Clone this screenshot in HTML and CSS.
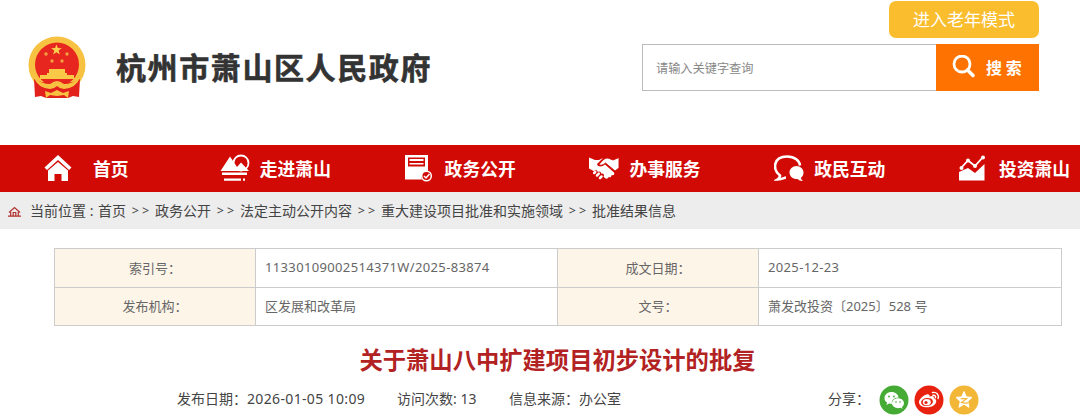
FILE: index.html
```
<!DOCTYPE html>
<html lang="zh-CN">
<head>
  <meta charset="UTF-8">
  <meta name="viewport" content="width=device-width, initial-scale=1.0">
  <title>杭州市萧山区人民政府</title>
  <link rel="stylesheet" href="styles.css">
</head>
<body>
  <div class="header">
    <div class="logo">
      <svg class="emblem" viewBox="0 0 58 63" width="58" height="63">
        <circle cx="29" cy="29" r="28.500" fill="#f7c242"/>
        <circle cx="29" cy="28.500" r="22" fill="#e6261f"/>
        <path d="M28.500 8.500l1.300 3.500 4 .2-3.200 2.400 1.200 3.900-3.300-2.300-3.400 2.300 1.200-3.900-3.200-2.400 4-.2z" fill="#f9cf4e"/>
        <g fill="#f3a03e">
          <circle cx="18" cy="18" r="1.700"/><circle cx="39" cy="18" r="1.700"/>
          <circle cx="24" cy="25" r="1.700"/><circle cx="34" cy="25" r="1.700"/>
        </g>
        <path d="M21 33h16v4h2v2h7v4H12v-4h7v-2h2z" fill="#f9c846"/>
        <path d="M6 43q10 6 23 2 13 4 23-2l-1 18-6-1-5 2H18l-5-2-6 1z" fill="#e3211c"/>
        <path d="M6 42q8 6 16 6 4-3 7-3t7 3q8 0 16-6-4 10-16 11-4 0-7-3-3 3-7 3Q10 52 6 42z" fill="#f7c242"/>
        <path d="M17 55l6 2 6-3 6 3 6-2-1 7-4-3-7 1-7-1-4 3z" fill="#f7c242"/>
      </svg>
      <h1>杭州市萧山区人民政府</h1>
    </div>
    <div class="tools">
      <a class="elder">进入老年模式</a>
      <div class="search">
        <input type="text" placeholder="请输入关键字查询">
        <button>
          <svg viewBox="0 0 24 24" width="24" height="24" fill="none" stroke="#fff">
            <circle cx="10" cy="9" r="8" stroke-width="2.800"/>
            <path d="M15.500 15l5.500 5.500" stroke-width="3.500" stroke-linecap="round"/>
          </svg>
          <span>搜 索</span>
        </button>
      </div>
    </div>
  </div>

  <div class="nav">
    <a class="home">
      <svg viewBox="0 0 30 30" width="30" height="30" fill="#fff">
        <path d="M15 1L28.500 13.500l-2.500 2.500L15 6 4 16l-2.500-2.500z"/>
        <path d="M15 8l10 8.500V27h-6.500v-7h-7v7H5V16.500z"/>
      </svg>
      <span>首页</span>
    </a>
    <a>
      <svg viewBox="0 0 30 30" width="30" height="30" fill="#fff">
        <circle cx="21" cy="9" r="7.500" fill="none" stroke="#fff" stroke-width="1.800"/>
        <path d="M.5 17L10 2.500 17 13l4-4.500 8 8.500z"/>
        <path d="M2 18.500h25v2.500H2zM4 24.500h17v2.300H4zM23 24.500h2v2.300h-2z"/>
      </svg>
      <span>走进萧山</span>
    </a>
    <a>
      <svg viewBox="0 0 30 30" width="30" height="30" fill="#fff">
        <path fill-rule="evenodd" d="M0 1h23v16.500A5.500 5.500 0 0 0 17 25.500H0zM3 3.500v9h17v-9z"/>
        <path d="M4.500 5h14v2h-14zM4.500 9h14v1.500h-14z"/>
        <circle cx="21.500" cy="22" r="4.800" fill="#d10a05" stroke="#fff" stroke-width="1.500"/>
        <path d="M19 22l2 2 3.500-4" fill="none" stroke="#fff" stroke-width="1.500"/>
      </svg>
      <span>政务公开</span>
    </a>
    <a>
      <svg viewBox="0 0 30 30" width="30" height="30" fill="#fff">
        <path d="M0 3.500l6 2.500h4l4-2-6 6c1 3.500 5 3 8 .5l9 8c1 2-.5 3.200-2.500 2.500.2 2-1.800 2.800-3 2-.5 2-2.500 2-3.500 1l-1.500-1.200c1.500-2-.5-3.800-2.300-3 0-2.200-2.200-3-3.400-1.800-.5-2-2.800-2.200-3.800-.7L0 14.500z"/>
        <path d="M30 3.500L24 6l-5-2c-4 0-6 3-9 6.500 2 1.500 4 .5 6.500-1.500L26 17l4-3z" stroke="#d10a05" stroke-width=".9"/>
        <path d="M5.200 19l1-1M8 21.500l1.800-1.800M11 24l1.500-1.500" stroke="#fff" stroke-width="2.500" stroke-linecap="round"/>
      </svg>
      <span>办事服务</span>
    </a>
    <a>
      <svg viewBox="0 0 30 30" width="30" height="30" fill="#fff">
        <path d="M12 23.500c-2 0-3 2-8.500 2 2.500-1.500 2.500-3 2.500-4C-2 15-.5 2.500 13 2.500c8 0 12.500 4.500 13 9" fill="none" stroke="#fff" stroke-width="2.600"/>
        <path d="M22.500 12c4 0 7 3 7 6.500 0 2.500-1 4-2.500 5.200 0 1.300.8 2.300 2 3.300-2.500.2-4-.8-5.500-2-4.500.3-8-2.500-8-6.500 0-3.500 3-6.500 7-6.500z"/>
      </svg>
      <span>政民互动</span>
    </a>
    <a>
      <svg viewBox="0 0 30 30" width="30" height="30" fill="#fff">
        <path d="M0 18l9-4 7 5 9.500-9v16.500H0z"/>
        <path d="M2 14l7-7.500 7 5.500 8-9" fill="none" stroke="#fff" stroke-width="1.800"/>
        <circle cx="2.500" cy="14" r="2"/><circle cx="9" cy="6.500" r="2"/><circle cx="16" cy="12" r="2"/><circle cx="24" cy="3.500" r="2"/>
      </svg>
      <span>投资萧山</span>
    </a>
  </div>

  <div class="crumb">
    <svg viewBox="0 0 13 11" width="13" height="11" fill="none" stroke="#b3312d" stroke-width="1.200">
      <path d="M1 6.500L6.500 1.500 12 6.500M2.700 6v4M10.300 6v4M0 10.200h13M5.200 10V6.500h2.600V10"/>
    </svg>
    <span class="pos">当前位置 : </span>
    <a>首页</a><i>&gt;&gt;</i><a>政务公开</a><i>&gt;&gt;</i><a>法定主动公开内容</a><i>&gt;&gt;</i><a>重大建设项目批准和实施领域</a><i>&gt;&gt;</i><a>批准结果信息</a>
  </div>

  <table class="info">
    <tr>
      <th>索引号：</th>
      <td class="wide num">11330109002514371W/2025-83874</td>
      <th>成文日期：</th>
      <td class="num">2025-12-23</td>
    </tr>
    <tr>
      <th>发布机构：</th>
      <td class="wide">区发展和改革局</td>
      <th>文号：</th>
      <td>萧发改投资〔2025〕528 号</td>
    </tr>
  </table>

  <h2 class="title">关于萧山八中扩建项目初步设计的批复</h2>

  <div class="meta">
    <span class="date">发布日期：<b>2026-01-05 10:09</b></span>
    <span class="count">访问次数: 13</span>
    <span>信息来源：办公室</span>
    <div class="share">
      <span>分享：</span>
      <svg viewBox="0 0 30 30" width="30" height="30">
        <circle cx="15" cy="15" r="14.500" fill="#45ab35"/>
        <path d="M12.500 7c4 0 7 2.500 7 5.500-4.500 0-7.500 3-6.500 6.500-1 0-2-.1-3-.4L7.500 20l.6-2.400C6.500 16.500 5.500 15 5.500 13c0-3.300 3-6 7-6z" fill="#fff"/>
        <path d="M19 13.300c3.300 0 6 2.200 6 5 0 1.500-.8 2.800-2 3.700l.4 1.800-2-1c-3.900 1.200-8.400-1-8.400-4.500 0-2.800 2.700-5 6-5z" fill="#fff"/>
        <g fill="#45ab35"><circle cx="10" cy="11.500" r=".9"/><circle cx="15" cy="11.500" r=".9"/><circle cx="17" cy="17" r=".8"/><circle cx="21" cy="17" r=".8"/></g>
      </svg>
      <svg viewBox="0 0 30 30" width="30" height="30">
        <circle cx="15" cy="15" r="14.500" fill="#e8220f"/>
        <path d="M12.500 9.500c2-.8 3.300 0 3 2 3-1.200 5-.5 4.200 1.800 2 .7 2.800 1.800 2.500 3.500-.6 3.300-4.500 5.500-9 5.500-4.700 0-8.200-2-8.200-5 0-2.800 3.700-6.600 7.500-7.800z" fill="#fff"/>
        <ellipse cx="13" cy="17" rx="6" ry="4" transform="rotate(-8 13 17)" fill="#e8220f"/>
        <ellipse cx="12.800" cy="17.200" rx="4" ry="3.100" fill="#fff"/>
        <circle cx="12" cy="17.500" r="1.600" fill="#e8220f"/>
        <path d="M18.500 7.500c4-.8 6.800 2.200 5.600 6M19 10.300c1.800-.3 3 .9 2.400 2.500" fill="none" stroke="#fff" stroke-width="1.400" stroke-linecap="round"/>
      </svg>
      <svg viewBox="0 0 30 30" width="30" height="30">
        <circle cx="15" cy="15" r="14.500" fill="#f3b738"/>
        <path d="M15 6.500l2.300 5.400 5.700.5-4.300 4 1.300 5.900-5-3.100-5 3.100 1.300-5.900-4.300-4 5.700-.5z" fill="#fff" stroke="#fff" stroke-linejoin="round"/>
        <path d="M11.800 13.600h5.800l-5 4q3 .8 6.600.2" fill="none" stroke="#f3b738" stroke-width="1.200"/>
      </svg>
    </div>
  </div>
</body>
</html>
```
FILE: styles.css
```
* {padding: 0; margin: 0; box-sizing: border-box;}

body {
  width: 1080px;
  height: 418px;
  overflow: hidden;
  background: #fff;
  font-family: "Noto Sans", "Noto Sans CJK SC", sans-serif;
  font-size: 14px;
  color: #444;
}
svg {
  display: block;
  flex-shrink: 0;
}
.header {
  display: flex;
  justify-content: space-between;
  height: 145px;
  padding: 1px 41px 0 28px;
}
.logo {
  display: flex;
  align-items: flex-start;
  padding-top: 35px;
}
.logo h1 {
  margin-left: 30px;
  font-family: "Noto Sans CJK SC", sans-serif;
  font-size: 30px;
  line-height: 60px;
  letter-spacing: 1.6px;
  color: #333;
  -webkit-text-stroke: .6px #333;
}
.tools {
  display: flex;
  flex-direction: column;
  align-items: flex-end;
}
.elder {
  width: 150px;
  height: 37px;
  margin-bottom: 6px;
  border-radius: 7px;
  background: #f9bd2e;
  font-size: 17px;
  line-height: 37px;
  text-align: center;
  color: #fff;
}
.search {
  display: flex;
  width: 397px;
  height: 47px;
}
.search input {
  width: 294px;
  padding: 0 13px;
  border: 1px solid #bbb;
  border-right: 0;
  font-family: "Noto Sans CJK SC", sans-serif;
  font-size: 12.2px;
  outline: none;
}
.search input::placeholder {
  color: #888;
}
.search button {
  display: flex;
  align-items: center;
  width: 103px;
  padding: 0 0 2px 16px;
  border: 0;
  background: #fd7200;
  font-family: "Noto Sans CJK SC", sans-serif;
  font-size: 16px;
  font-weight: bold;
  color: #fff;
}
.search button span {
  margin-left: 10px;
  white-space: pre;
}
.nav {
  display: flex;
  height: 47px;
  padding-left: 35px;
  background: #d10a05;
}
.nav a {
  display: flex;
  flex-shrink: 0;
  align-items: center;
  width: 184.8px;
  font-size: 17.8px;
  font-weight: bold;
  color: #fff;
}
.nav a:last-child {
  width: auto;
}
.nav a span {
  margin: -1px 0 0 10px;
  white-space: nowrap;
}
.nav .home {
  padding-left: 8px;
}
.nav .home span {
  margin-left: 20px;
}
.crumb {
  display: flex;
  align-items: center;
  height: 37px;
  padding: 0 0 1px 8px;
  background: #ededed;
  white-space: nowrap;
}
.crumb .pos {
  width: 68px;
  margin-left: 9px;
  white-space: pre;
}
.crumb svg {
  margin-top: 3px;
}
.crumb i {
  width: 29px;
  font-size: 12.5px;
  font-style: normal;
  letter-spacing: 3px;
  padding-left: 3px;
  text-align: center;
}
.info {
  width: 1008px;
  margin: 19px 0 0 54px;
  border-collapse: collapse;
  table-layout: fixed;
  font-size: 13px;
  color: #666;
}
.info th,
.info td {
  height: 38.5px;
  padding-bottom: 1px;
  border: 1px solid #ccc;
}
.info th {
  width: 201px;
  background: #fef5e9;
  font-weight: normal;
}
.info td {
  padding-left: 9px;
}
.info td.wide {
  width: 302px;
}
.info td.num {
  letter-spacing: .35px;
}
.title {
  margin-top: 16px;
  padding-left: 35px;
  font-size: 23.3px;
  line-height: 36px;
  text-align: center;
  color: #b22222;
}
.meta {
  display: flex;
  align-items: center;
  height: 40px;
  padding-left: 177px;
}
.meta .date {
  width: 220px;
}
.meta .date b {
  font-weight: normal;
  letter-spacing: .35px;
}
.meta .count {
  width: 112px;
}
.share {
  display: flex;
  align-items: center;
  margin-left: auto;
  padding-right: 101px;
}
.share span {
  margin-right: 9px;
}
.share svg {
  margin-top: 3px;
}
.share svg + svg {
  margin-left: 5px;
}
```
